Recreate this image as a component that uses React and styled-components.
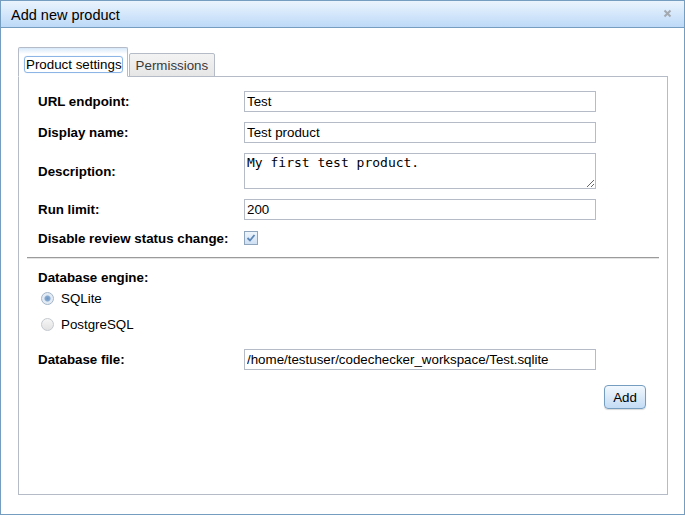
import React from "react";
import styled, { createGlobalStyle } from "styled-components";

const Global = createGlobalStyle`
  html, body { margin: 0; padding: 0; background: #fff; }
  body { font-family: "Liberation Sans", Arial, sans-serif; font-size: 13.33px; color: #000; }
  * { box-sizing: border-box; }
`;

const Dialog = styled.div`
  width: 685px;
  height: 515px;
  border: 1px solid #759dc0;
  background: #fff;
  display: flex;
  flex-direction: column;
`;

const TitleBar = styled.div`
  height: 27px;
  flex: none;
  border-bottom: 1px solid #759dc0;
  background: linear-gradient(to bottom, #eaf3fd 0%, #d4e7fb 50%, #bcd9f7 100%);
  display: flex;
  align-items: center;
  justify-content: space-between;
  padding: 0 12px 0 10px;
`;

const Title = styled.span`
  font-size: 14.5px;
  color: #000;
  padding-top: 1px;
`;

const Close = styled.span`
  width: 9px;
  height: 9px;
  display: flex;
  margin-top: -2px;
`;

const Body = styled.div`
  flex: 1;
  padding: 19px 16px 19px 17px;
  display: flex;
  flex-direction: column;
`;

const TabStrip = styled.div`
  display: flex;
  align-items: flex-end;
  gap: 1px;
  position: relative;
  z-index: 1;
  margin-bottom: -1px;
`;

const Tab = styled.div`
  border: 1px solid #b5bcc7;
  border-bottom: ${(p) => (p.$active ? "1px solid #fff" : "1px solid #b5bcc7")};
  background: ${(p) =>
    p.$active
      ? "linear-gradient(to bottom, #d7e8fa 0px, #ffffff 6px, #ffffff 100%)"
      : "linear-gradient(to bottom, #f3f3f3 0%, #e6e6e6 100%)"};
  height: ${(p) => (p.$active ? "30px" : "24px")};
  padding: ${(p) => (p.$active ? "8px 4px 0 5px" : "4px 6px 0 6px")};
  color: ${(p) => (p.$active ? "#000" : "#3a3a3a")};
  font-size: 13.33px;
  line-height: 15px;
  border-top-left-radius: 2px;
  border-top-right-radius: 2px;
`;

const FocusRing = styled.span`
  display: inline-block;
  border: 1px solid #8db6e6;
  border-radius: 3px;
  padding: 0 0 0 1px;
  line-height: 15px;
  height: 17px;
  box-shadow: 0 0 1px #b8d3f1;
`;

const Pane = styled.div`
  flex: 1;
  border: 1px solid #b5bcc7;
  padding: 14px 8px 0 8px;
  display: flex;
  flex-direction: column;
`;

const FormGrid = styled.div`
  display: grid;
  grid-template-columns: 206px 352px;
  row-gap: 10px;
  align-items: center;
  padding-left: 11px;
`;

const Label = styled.label`
  font-weight: bold;
  font-size: 13.33px;
  line-height: 15px;
`;

const TextInput = styled.input`
  width: 352px;
  height: 21px;
  border: 1px solid #b5bcc7;
  padding: 0 2px;
  font-family: "Liberation Sans", Arial, sans-serif;
  font-size: 13.33px;
  color: #000;
  outline: none;
  margin: 0;
`;

const TextArea = styled.textarea`
  width: 352px;
  height: 36px;
  border: 1px solid #b5bcc7;
  padding: 1px 2px;
  font-family: "DejaVu Sans Mono", monospace;
  font-size: 13px;
  line-height: 16px;
  color: #000;
  outline: none;
  margin: 0;
  display: block;
`;

const CheckCell = styled.div`
  height: 16px;
  display: flex;
  align-items: center;
`;

const CheckBox = styled.span`
  width: 14px;
  height: 14px;
  border: 1px solid #8ea5bd;
  background: linear-gradient(to bottom, #eef4fb, #cfe0f3);
  display: flex;
  align-items: center;
  justify-content: center;
`;

const Rule = styled.div`
  margin-top: 11px;
  border-top: 1px solid #9b9b9b;
  border-bottom: 1px solid #e4e4e4;
  height: 2px;
`;

const Section = styled.div`
  padding-left: 11px;
  padding-top: 11px;
  display: flex;
  flex-direction: column;
`;

const RadioGroup = styled.div`
  display: flex;
  flex-direction: column;
  gap: 11px;
  padding: 6px 0 0 3px;
`;

const RadioRow = styled.div`
  display: flex;
  align-items: center;
  gap: 7px;
  height: 15px;
  font-size: 13.33px;
`;

const Radio = styled.span`
  width: 13px;
  height: 13px;
  border-radius: 50%;
  border: 1px solid ${(p) => (p.$checked ? "#a3b4c8" : "#c4c9d0")};
  background: ${(p) =>
    p.$checked
      ? "radial-gradient(circle, #6f96c3 0, #86a9d0 2.5px, #dfe8f3 3.5px, #eef2f8 100%)"
      : "linear-gradient(to bottom, #f6f6f6, #e2e2e2)"};
`;

const FileGrid = styled(FormGrid)`
  padding-left: 0;
  margin-top: 17px;
`;

const Actions = styled.div`
  display: flex;
  justify-content: flex-end;
  padding-right: 13px;
  margin-top: 15px;
`;

const Button = styled.button`
  height: 24px;
  width: 42px;
  border: 1px solid #759dc0;
  border-radius: 4px;
  background: linear-gradient(to bottom, #f2f8fe 0%, #dbe9f8 50%, #c4dcf5 100%);
  font-family: "Liberation Sans", Arial, sans-serif;
  font-size: 13.33px;
  color: #000;
  padding: 0;
  box-shadow: 0 1px 1px rgba(0, 0, 0, 0.15);
`;

export default function App() {
  return (
    <>
      <Global />
      <Dialog>
        <TitleBar>
          <Title>Add new product</Title>
          <Close>
            <svg width="9" height="9" viewBox="0 0 9 9">
              <path d="M1.5 1.5 L7.5 7.5 M7.5 1.5 L1.5 7.5" stroke="#a4a9b0" strokeWidth="2" />
            </svg>
          </Close>
        </TitleBar>
        <Body>
          <TabStrip>
            <Tab $active>
              <FocusRing>Product settings</FocusRing>
            </Tab>
            <Tab>Permissions</Tab>
          </TabStrip>
          <Pane>
            <FormGrid>
              <Label>URL endpoint:</Label>
              <TextInput defaultValue="Test" readOnly />
              <Label>Display name:</Label>
              <TextInput defaultValue="Test product" readOnly />
              <Label>Description:</Label>
              <TextArea defaultValue="My first test product." readOnly />
              <Label>Run limit:</Label>
              <TextInput defaultValue="200" readOnly />
              <Label>Disable review status change:</Label>
              <CheckCell>
                <CheckBox>
                  <svg width="10" height="10" viewBox="0 0 10 10">
                    <path d="M1.5 5 L4 7.5 L8.5 2" fill="none" stroke="#5b86b8" strokeWidth="1.8" />
                  </svg>
                </CheckBox>
              </CheckCell>
            </FormGrid>
            <Rule />
            <Section>
              <Label>Database engine:</Label>
              <RadioGroup>
                <RadioRow>
                  <Radio $checked />
                  <span>SQLite</span>
                </RadioRow>
                <RadioRow>
                  <Radio />
                  <span>PostgreSQL</span>
                </RadioRow>
              </RadioGroup>
              <FileGrid>
                <Label>Database file:</Label>
                <TextInput defaultValue="/home/testuser/codechecker_workspace/Test.sqlite" readOnly />
              </FileGrid>
            </Section>
            <Actions>
              <Button>Add</Button>
            </Actions>
          </Pane>
        </Body>
      </Dialog>
    </>
  );
}
